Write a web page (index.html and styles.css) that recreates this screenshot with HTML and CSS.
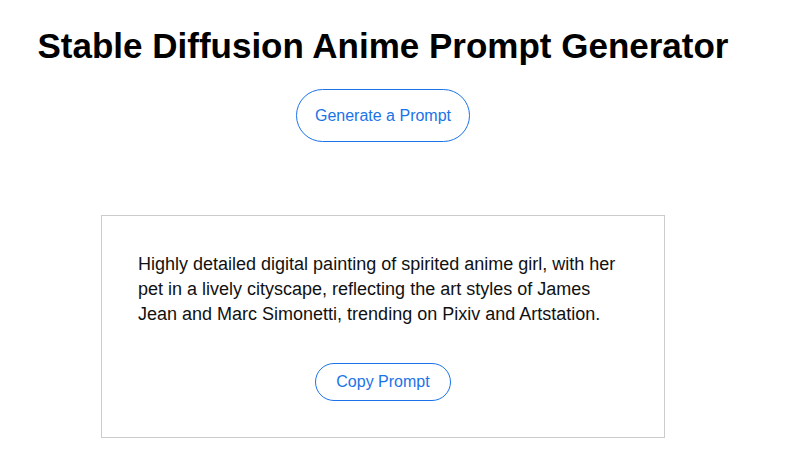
FILE: index.html
```html
<!DOCTYPE html>
<html>
<head>
<meta charset="utf-8">
<link rel="stylesheet" href="styles.css">
</head>
<body>
<div class="page">
  <h1 class="title">Stable Diffusion Anime Prompt Generator</h1>
  <button class="pill generate">Generate a Prompt</button>
  <div class="card">
    <p class="prompt">Highly detailed digital painting of spirited anime girl, with her pet in a lively cityscape, reflecting the art styles of James Jean and Marc Simonetti, trending on Pixiv and Artstation.</p>
    <button class="pill copy">Copy Prompt</button>
  </div>
</div>
</body>
</html>
```
FILE: styles.css
```css
body {
  margin: 8px;
  background: #fff;
  font-family: "Liberation Sans", Arial, sans-serif;
  color: #000;
}
.page {
  width: 750px;
  display: flex;
  flex-direction: column;
  align-items: center;
}
.title {
  font-size: 35px;
  font-weight: bold;
  margin: 18px 0 23px;
  line-height: 40px;
  white-space: nowrap;
}
.pill {
  font-family: "Liberation Sans", Arial, sans-serif;
  font-size: 16px;
  color: #1a73e8;
  background: #fff;
  border: 1px solid #1a73e8;
  border-radius: 999px;
  cursor: pointer;
}
.generate {
  padding: 16px 18px;
  line-height: 19px;
}
.card {
  margin-top: 73px;
  width: 490px;
  padding: 36px;
  border: 1px solid #ccc;
  display: flex;
  flex-direction: column;
  align-items: center;
}
.prompt {
  margin: 0 0 36px;
  font-size: 18px;
  line-height: 25px;
  color: #111;
  align-self: stretch;
}
.copy {
  padding: 8px 20px;
  line-height: 20px;
}
```
